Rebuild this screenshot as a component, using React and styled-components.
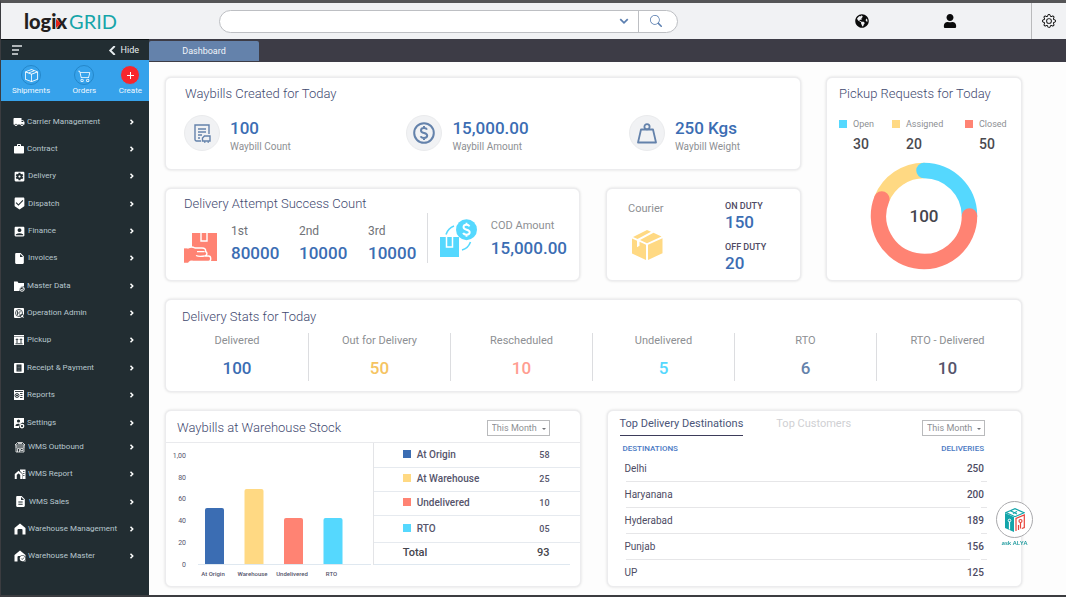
import React, { useState } from "react";
import styled, { createGlobalStyle } from "styled-components";
import { FaGlobeAmericas, FaUser } from "react-icons/fa";
import { BsGear, BsCart2, BsBoxSeam, BsSearch } from "react-icons/bs";
import {
  MdLocalShipping,
  MdWork,
  MdSettingsApplications,
  MdBeenhere,
  MdAccountBox,
  MdInsertDriveFile,
  MdDescription,
} from "react-icons/md";

const GlobalStyle = createGlobalStyle`
  * {
    box-sizing: border-box;
  }
  body {
    margin: 0;
    font-family: Roboto, "Liberation Sans", sans-serif;
    background: #fdfdfd;
  }
  button, input, select {
    font-family: inherit;
  }
  h2, p, ul, dl, dd {
    margin: 0;
    padding: 0;
  }
  svg {
    display: block;
    flex-shrink: 0;
  }
`;

const Page = styled.div`
  display: flex;
  flex-direction: column;
  min-height: 100vh;
  border-top: 3px solid #555557;
  border-bottom: 2px solid #3b3c40;
  border-left: 1px solid #3b3c40;
`;

/* header */

const Header = styled.header`
  display: flex;
  align-items: center;
  height: 36px;
  background: #f1f2f4;
`;

const Logo = styled.a`
  display: flex;
  align-items: center;
  width: 148px;
  padding-left: 23px;
  font-family: Lato, "Open Sans", sans-serif;
  font-size: 20px;
  line-height: 24px;
  color: #16a5a9;
  text-decoration: none;
  > b {
    font-weight: 900;
    color: #231f20;
  }
  > b:last-of-type {
    margin-right: 2px;
  }
  > svg {
    margin: 4px -6px 0 0;
    z-index: 1;
  }
`;

const Search = styled.form`
  display: flex;
  flex: 1;
  height: 23px;
  margin-left: 70px;
  border: 1px solid #bdbfc3;
  border-radius: 12px;
  background: #fff;
  overflow: hidden;
  > input {
    flex: 1;
    min-width: 0;
    padding: 0 12px;
    border: none;
    outline: none;
    background: none;
    font-size: 11px;
  }
`;

const SearchButton = styled.button`
  display: flex;
  align-items: center;
  justify-content: center;
  width: ${(props) => (props.$divided ? "39px" : "28px")};
  padding: 0 ${(props) => (props.$divided ? "5px" : "0")} 0 0;
  border: none;
  border-left: ${(props) => (props.$divided ? "1px solid #bdbfc3" : "none")};
  background: none;
  color: #5b7fb0;
`;

const HeaderButtons = styled.div`
  display: flex;
  justify-content: space-between;
  width: 102px;
  margin: 0 74px 0 177px;
`;

const IconButton = styled.button`
  display: flex;
  align-items: center;
  justify-content: center;
  width: 14px;
  height: 14px;
  padding: 0;
  border: none;
  background: none;
  color: #0b0b0b;
`;

const SettingsArea = styled.div`
  display: flex;
  align-items: center;
  justify-content: center;
  width: 35px;
  height: 36px;
  border-left: 1px solid #b9babc;
`;

/* sidebar */

const Body = styled.div`
  display: flex;
  flex: 1;
`;

const Sidebar = styled.nav`
  display: flex;
  flex-direction: column;
  width: 148px;
  flex-shrink: 0;
  background: #222d32;
`;

const SidebarHeader = styled.div`
  display: flex;
  align-items: center;
  justify-content: space-between;
  height: 21px;
  padding: 0 10px 0 9px;
  border-top: 1px solid #0c1012;
`;

const HideButton = styled.button`
  display: flex;
  align-items: center;
  gap: 4px;
  padding: 0;
  border: none;
  background: none;
  font-size: 9px;
  line-height: 12px;
  color: #e8edf0;
`;

const QuickActions = styled.div`
  display: flex;
  justify-content: space-between;
  height: 41px;
  padding: 5px 7px 0 11px;
  background: #36a2eb;
`;

const QuickAction = styled.button`
  display: flex;
  flex-direction: column;
  align-items: center;
  gap: 1px;
  padding: 0;
  border: none;
  background: none;
  font-size: 8px;
  line-height: 10px;
  color: #f0f8fe;
`;

const ActionCircle = styled.span`
  display: flex;
  align-items: center;
  justify-content: center;
  width: 20px;
  height: 20px;
  border: 1px solid ${(props) => (props.$accent ? "#36a2eb" : "#2487ca")};
  border-radius: 50%;
  background: ${(props) => (props.$accent ? "#f7262d" : "transparent")};
  color: #fff;
`;

const Menus = styled.div`
  display: flex;
  flex-direction: column;
  flex: 1;
  padding: 7px 0 25px;
`;

const Menu = styled.ul`
  display: grid;
  grid-auto-rows: 1fr;
  flex: ${(props) => props.$rows} 1 0;
  margin-top: ${(props) => (props.$second ? "-3px" : "0")};
  padding-left: ${(props) => (props.$second ? "1px" : "0")};
  list-style: none;
`;

const MenuItem = styled.li`
  display: flex;
  > a {
    display: flex;
    align-items: center;
    flex: 1;
    gap: 2px;
    padding: 0 14px 0 12px;
    font-size: 8px;
    line-height: 12px;
    color: #b8c7ce;
    text-decoration: none;
  }
  > a > span {
    flex: 1;
  }
  > a > svg {
    color: #fff;
  }
`;

/* content */

const Content = styled.div`
  display: flex;
  flex-direction: column;
  flex: 1;
  min-width: 0;
`;

const PageTabs = styled.div`
  display: flex;
  align-items: flex-end;
  height: 23px;
  padding-bottom: 1px;
  background: #3d3c46;
`;

const PageTab = styled.button`
  width: 110px;
  height: 20px;
  padding: 0;
  border: none;
  border-radius: 2px 2px 0 0;
  background: #6482ab;
  font-size: 9px;
  color: #f1f5fa;
`;

const Main = styled.main`
  display: flex;
  flex-direction: column;
  gap: 18px;
  padding: 15px 44px 8px 16px;
`;

const TopRow = styled.div`
  display: grid;
  grid-template-columns: 1fr 196px;
  gap: 25px;
`;

const TopLeft = styled.div`
  display: flex;
  flex-direction: column;
  gap: 18px;
`;

const SplitRow = styled.div`
  display: grid;
  grid-template-columns: 1fr 195px;
  gap: 26px;
`;

const BottomRow = styled.div`
  display: grid;
  grid-template-columns: 1fr 1fr;
  gap: 26px;
`;

const Card = styled.section`
  border: 1px solid #ececee;
  border-radius: 6px;
  background: #fff;
  box-shadow: 0 0 3px rgba(0, 0, 0, 0.14);
`;

const Title = styled.h2`
  font-size: 13px;
  font-weight: 300;
  line-height: 16px;
  color: #3f4a70;
`;

const Value = styled.dd`
  font-size: 17px;
  font-weight: 500;
  line-height: 20px;
  color: ${(props) => props.$color || "#3b6db3"};
`;

const Label = styled.dt`
  font-size: ${(props) => (props.$large ? "12px" : "10px")};
  line-height: 16px;
  color: ${(props) => (props.$dark ? "#707277" : "#8d8f93")};
`;

const WaybillsCard = styled(Card)`
  padding: 8px 0 14px 18px;
  > h2 {
    padding-left: 1px;
  }
`;

const WaybillStats = styled.div`
  display: grid;
  grid-template-columns: 13fr 13fr 10fr;
  margin-top: 13px;
`;

const WaybillStat = styled.div`
  display: flex;
  align-items: flex-start;
  gap: 10px;
  > dl {
    display: flex;
    flex-direction: column-reverse;
    gap: 1px;
    padding-top: 3px;
  }
`;

const IconCircle = styled.span`
  display: flex;
  align-items: center;
  justify-content: center;
  width: 36px;
  height: 36px;
  border: 1px solid #eaebed;
  border-radius: 50%;
  background: #f1f2f4;
`;

const AttemptsCard = styled(Card)`
  display: flex;
  justify-content: space-between;
  padding: 7px 12px 17px 18px;
`;

const Attempts = styled.div`
  display: grid;
  grid-template-columns: 47px 68px 69px 47px;
  align-items: end;
  margin-top: 11px;
`;

const StackedStat = styled.dl`
  display: flex;
  flex-direction: column;
  gap: 4px;
`;

const CodStat = styled.div`
  display: flex;
  align-items: center;
  align-self: flex-end;
  gap: 13px;
  height: 50px;
  padding-left: 12px;
  border-left: 1px solid #dcdde0;
`;

const CourierCard = styled(Card)`
  display: grid;
  grid-template-columns: 1fr 75px;
  padding: 11px 0 7px 21px;
`;

const Courier = styled.div`
  padding-top: 1px;
  font-size: 11px;
  line-height: 16px;
  color: #8d8f93;
  > svg {
    margin: 12px 0 0 3px;
  }
`;

const Duties = styled.div`
  display: flex;
  flex-direction: column;
  gap: 9px;
`;

const DutyLabel = styled.dt`
  font-size: 9px;
  font-weight: 500;
  line-height: 12px;
  color: #4e4a63;
`;

const PickupCard = styled(Card)`
  padding: 8px 12px 10px;
  > svg {
    margin: 9px auto 0;
  }
`;

const PickupLegend = styled.div`
  display: grid;
  grid-template-columns: 53px 73px 1fr;
  margin-top: 16px;
`;

const PickupStat = styled.dl`
  > dt {
    display: flex;
    align-items: center;
    gap: 6px;
    font-size: 9px;
    line-height: 12px;
    color: #8d8f93;
  }
  > dd {
    margin-top: 5px;
    padding-left: 14px;
    font-size: 14px;
    font-weight: 500;
    line-height: 18px;
    color: #4a4a4f;
  }
`;

const Swatch = styled.i`
  display: inline-block;
  width: 8px;
  height: 8px;
  background: ${(props) => props.$color};
`;

const StatsCard = styled(Card)`
  padding: 9px 3px 10px 0;
  > h2 {
    padding-left: 16px;
  }
`;

const DeliveryStats = styled.div`
  display: grid;
  grid-template-columns: repeat(6, 1fr);
  margin-top: 8px;
`;

const DeliveryStat = styled.dl`
  display: flex;
  flex-direction: column;
  align-items: center;
  gap: 9px;
  padding-bottom: 3px;
  & + & {
    border-left: 1px solid #dcdde0;
  }
`;

const StatLabel = styled.dt`
  font-size: 11px;
  line-height: 16px;
  color: #8d8f93;
`;

/* bottom cards */

const StockHeader = styled.div`
  display: flex;
  align-items: center;
  justify-content: space-between;
  height: 32px;
  padding: 2px 30px 0 11px;
  border-bottom: 1px solid #e9eaed;
`;

const SelectBox = styled.label`
  display: inline-flex;
  position: relative;
  > select {
    appearance: none;
    width: 63px;
    height: 16px;
    padding: 0 4px;
    border: 1px solid #b9babc;
    border-radius: 0;
    background: #fff;
    font-size: 9px;
    color: #8d8f93;
  }
  > svg {
    position: absolute;
    top: 8px;
    right: 4px;
    pointer-events: none;
  }
`;

const StockBody = styled.div`
  display: grid;
  grid-template-columns: 1fr 1fr;
`;

const StockLegend = styled.div`
  border-left: 1px solid #e3e4e7;
  align-self: start;
`;

const StockTable = styled.table`
  width: 100%;
  border-collapse: collapse;
  color: #55546b;
  th,
  td {
    height: 24px;
    padding: 0;
    border-bottom: 1px solid #e6eaef;
    font-size: 10px;
    font-weight: 500;
    line-height: 14px;
  }
  tr:last-child > * {
    height: 27px;
  }
  th {
    padding-left: 29px;
    text-align: left;
  }
  th > i {
    margin-right: 6px;
  }
  td {
    padding-right: 30px;
    font-size: 9px;
    text-align: right;
  }
  tfoot tr:last-child > * {
    height: 22px;
    border: none;
    font-size: 11px;
    color: #45454d;
  }
`;

const Baseline = styled.hr`
  height: 1px;
  margin: 0 10px 0 0;
  border: none;
  background: #dfe8f0;
`;

const DestinationsCard = styled(Card)`
  padding: 5px 34px 0 12px;
`;

const DestinationsHeader = styled.div`
  display: flex;
  align-items: flex-end;
  padding-right: 2px;
  > label {
    margin-left: auto;
  }
`;

const ListTab = styled.button`
  margin-right: 33px;
  padding: 0 0 3px;
  border: none;
  border-bottom: 1px solid ${(props) => (props.$active ? "#3d3c5a" : "transparent")};
  background: none;
  font-size: 11px;
  line-height: 16px;
  color: ${(props) => (props.$active ? "#4a5578" : "#cfd0d3")};
`;

const DestinationsTable = styled.table`
  width: 100%;
  margin-top: 6px;
  border-collapse: collapse;
  color: #4d4b63;
  th,
  td {
    padding: 0;
    text-align: left;
  }
  th:last-child,
  td:last-child {
    padding-right: 3px;
    text-align: right;
  }
  thead th {
    height: 14px;
    padding-left: 3px;
    font-size: 8px;
    font-weight: 500;
    line-height: 10px;
    color: #4a79c4;
  }
  tbody td {
    height: 26px;
    padding-left: 5px;
    font-size: 10px;
    line-height: 14px;
  }
  tbody td:last-child {
    font-weight: 500;
  }
  tbody tr:not(:last-child) {
    background: linear-gradient(
        to right,
        transparent 6px,
        #e6e6e8 6px calc(100% - 17px),
        transparent 0 calc(100% - 6px),
        #e6e6e8 0
      )
      bottom / 100% 1px no-repeat;
  }
`;

const AskButton = styled.button`
  position: fixed;
  right: 33px;
  bottom: 49px;
  display: flex;
  flex-direction: column;
  align-items: center;
  padding: 0;
  border: none;
  background: none;
  font-family: "Open Sans", sans-serif;
  font-size: 6px;
  font-weight: 600;
  line-height: 10px;
  color: #16969a;
  > span {
    display: flex;
    align-items: center;
    justify-content: center;
    width: 37px;
    height: 37px;
    border: 1px solid #a9a9ac;
    border-radius: 50%;
    background: #fff;
  }
`;

/* icons */

const Chevron = ({ size = 6, width = 2, path = "M2 1l3 3-3 3" }) => (
  <svg width={size} height={size} viewBox="0 0 8 8" fill="none" stroke="currentColor" strokeWidth={width}>
    <path d={path} />
  </svg>
);

const MasterDataIcon = () => (
  <svg width="12" height="12" viewBox="0 0 24 24" fill="currentColor">
    <path d="M2 3h7l2 3h11v7a7 7 0 0 0-9 9H2z" />
    <circle cx="18" cy="18" r="4.500" fill="none" stroke="currentColor" strokeWidth="2" />
    <path d="M16 18l2 2 3-4" fill="none" stroke="currentColor" strokeWidth="1.500" />
  </svg>
);

const OperationIcon = () => (
  <svg width="12" height="12" viewBox="0 0 24 24" fill="currentColor">
    <path d="M4 2h16a2 2 0 0 1 2 2v16a2 2 0 0 1-2 2H4a2 2 0 0 1-2-2V4a2 2 0 0 1 2-2z" />
    <g fill="none" stroke="#222d32" strokeWidth="1.600">
      <circle cx="12" cy="12" r="7" />
      <path d="M9 8v8M9 12h5M14 8v3M12 16h3" />
      <circle cx="18" cy="18" r="3.500" />
    </g>
  </svg>
);

const PickupIcon = () => (
  <svg width="12" height="12" viewBox="0 0 24 24">
    <path d="M2 2h20v3H2zM2 6h20v16H2z" fill="currentColor" />
    <path d="M8 18v-8M5.500 12L8 9.500l2.500 2.500M16 18v-8M13.500 12L16 9.500l2.500 2.500M5 19.500h14" fill="none" stroke="#222d32" strokeWidth="1.800" />
  </svg>
);

const ReceiptIcon = () => (
  <svg width="12" height="12" viewBox="0 0 24 24">
    <rect x="2" y="2" width="20" height="20" rx="2" fill="currentColor" />
    <rect x="7" y="5" width="10" height="14" fill="#222d32" />
    <path d="M9 8h6M9 11h6M9 14h6M9 17h6" stroke="#8c979d" strokeWidth="1" />
  </svg>
);

const ReportsIcon = () => (
  <svg width="12" height="12" viewBox="0 0 24 24">
    <rect x="2" y="2" width="20" height="20" rx="1" fill="currentColor" />
    <g fill="none" stroke="#222d32" strokeWidth="1.800">
      <path d="M4 5h16M14 9h5M15 13h4M14 17h5" />
      <circle cx="8" cy="13" r="4" />
      <path d="M8 11v4M6 13h4" />
    </g>
  </svg>
);

const UserSettingsIcon = () => (
  <svg width="12" height="12" viewBox="0 0 24 24">
    <path d="M2 2h20v10l-3-1-6 4-1 7H2z" fill="currentColor" />
    <circle cx="11" cy="8" r="3.200" fill="#222d32" />
    <path d="M5 18c0-4 4-5 8-4l-2 4z" fill="#222d32" />
    <circle cx="18" cy="18" r="3.500" fill="none" stroke="currentColor" strokeWidth="2.500" />
  </svg>
);

const OutboundIcon = () => (
  <svg width="12" height="12" viewBox="0 0 24 24" fill="none" stroke="currentColor" strokeWidth="1.500">
    <path d="M2 8l5-5h10l5 5M2 8h20M3 12h18M4 8v14h16V8M7 22v-7h4v7M13 15h5v4h-5zM8 5h8" />
  </svg>
);

const WarehouseReportIcon = () => (
  <svg width="12" height="12" viewBox="0 0 24 24">
    <path d="M12 3h11v19h-6V11l-5-5z" fill="currentColor" />
    <path d="M18 7h3M18 11h3M18 15h3" stroke="#222d32" strokeWidth="1.500" />
    <path d="M3.500 22v-9L9 8l5.500 5v9" fill="none" stroke="currentColor" strokeWidth="4" />
  </svg>
);

const WarehouseIcon = ({ badge }) => (
  <svg width="12" height="12" viewBox="0 0 24 24">
    <path d="M1 10l11-9 11 9v13h-6v-9a2 2 0 0 0-2-2H9a2 2 0 0 0-2 2v9H1z" fill="currentColor" />
    {badge && (
      <>
        <circle cx="17" cy="17" r="6.500" fill="#222d32" />
        <circle cx="17" cy="17" r="5.500" fill="currentColor" />
        <path d="M14.500 17l2 2 3.500-4" fill="none" stroke="#222d32" strokeWidth="1.500" />
      </>
    )}
  </svg>
);

const WaybillIcon = () => (
  <svg width="17" height="19" viewBox="0 0 17 19" fill="none" stroke="#6482ab" strokeWidth="1.400">
    <path d="M7 17H2.500A1.500 1.500 0 0 1 1 15.500V1h14v9M4 5h8M4 8h8M4 11h4M4 14h2" />
    <path d="M8.500 17v-3l2-2h5.500v5z" />
    <path d="M10 18h1.500M13.500 18H15" strokeWidth="1.600" />
  </svg>
);

const DollarPath = () => (
  <path d="M15 8.600C14.500 7.500 13.400 7 12 7 10.200 7 9 8 9 9.400 9 12.900 15.200 11.200 15.200 14.600 15.200 16.100 13.900 17 12 17 10.300 17 9.100 16.400 8.700 15.200M12 5v2M12 17v2" />
);

const AmountIcon = () => (
  <svg width="22" height="22" viewBox="1 1 22 22" fill="none" stroke="#6482ab" strokeWidth="2">
    <circle cx="12" cy="12" r="9.800" />
    <DollarPath />
  </svg>
);

const WeightIcon = () => (
  <svg width="20" height="21" viewBox="0 0 20 21" fill="none" stroke="#6482ab" strokeWidth="1.800" strokeLinejoin="round">
    <path d="M4 6.500h12L19 19.500H1z" />
    <circle cx="10" cy="3.700" r="2.600" />
  </svg>
);

const HandBoxIcon = () => (
  <svg width="34" height="30" viewBox="0 0 34 30">
    <path d="M8 0h25v28H8z" fill="#ff8373" />
    <path d="M17 0v8h6V0" fill="none" stroke="#fff" strokeWidth="1.400" />
    <path
      d="M-2 15h6c2-1.200 5-1.200 7 0h7c3 0 4 1.500 3.500 3.500 2 1 2 4-1 4.500h4c3 0 3 5.500 0 5.500H11c-3 0-4-1-6 1v1h-7z"
      fill="#ff8373"
      stroke="#fff"
      strokeWidth="1.400"
    />
    <path d="M12 22.500c2 1 5 1 8.500.5M13 18.700h7.500" fill="none" stroke="#fff" strokeWidth="1.300" />
    <path d="M0 15.500h3.500V29H0z" fill="#ff8373" />
  </svg>
);

const CodIcon = () => (
  <svg width="38" height="38" viewBox="0 0 38 38">
    <path d="M0 18h19v20H0z" fill="#55d8fe" />
    <path d="M6.500 18v10h6V18" fill="none" stroke="#fff" strokeWidth="1.500" />
    <circle cx="26.500" cy="10.700" r="10.500" fill="#55d8fe" />
    <path d="M6 15.500C7.500 11 10 8.500 14 7M22 31c4-1 7-4 8.500-8" fill="none" stroke="#55d8fe" strokeWidth="1.600" />
    <g transform="translate(14.500 -1.300)" fill="none" stroke="#fff" strokeWidth="1.900">
      <DollarPath />
    </g>
  </svg>
);

const BoxIcon = () => (
  <svg width="32" height="32" viewBox="0 0 32 32" fill="#ffd983">
    <path d="M1 9.500l5 2.200v6.500l2.500-1.500v-3.900L15 15.700V31L1 24.500zM17 15.700l14.500-6.500v15L17 31zM2 8L16 1l4 1.800L6.500 10zM9 11l13.500-7.200 8 3.800L16 14.300z" />
  </svg>
);

const AlyaIcon = () => (
  <svg width="20" height="24" viewBox="0 0 20 24">
    <path d="M0 5l9 4v15l-9-4z" fill="#13a5aa" />
    <path d="M4.500 13.500v8" stroke="#fff" strokeWidth="1.200" />
    <circle cx="4.500" cy="12.500" r="1.300" fill="none" stroke="#fff" />
    <path d="M1 4.500L10 .7l9 4-9 4zM6 3l6 3M8 5.500l4-2" fill="none" stroke="#13a5aa" strokeWidth="1.200" />
    <path d="M11 23V10.500L19.300 7v12.500l-2.500 1M13.500 22v-5M15.500 14.500v6" fill="none" stroke="#e8453c" strokeWidth="1.200" />
    <circle cx="15.500" cy="13" r="1.500" fill="none" stroke="#e8453c" strokeWidth="1.200" />
  </svg>
);

const Donut = () => (
  <svg width="108" height="108" viewBox="-54 -54 108 108" fill="none" strokeWidth="15.500" strokeLinecap="round">
    <path d="M-42.200 -17A45.500 45.500 0 0 1 0 -45.500" stroke="#ffd983" />
    <path d="M0 -45.500A45.500 45.500 0 0 1 45.500 0" stroke="#55d8fe" />
    <path d="M45.500 0A45.500 45.500 0 1 1 -42.200 -17" stroke="#ff8373" />
    <text x="0" y="6" textAnchor="middle" fontSize="17" fontWeight="500" fill="#45454d">
      100
    </text>
  </svg>
);

/* data */

const menu = [
  { name: "Carrier Management", icon: <MdLocalShipping size={12} /> },
  { name: "Contract", icon: <MdWork size={12} /> },
  { name: "Delivery", icon: <MdSettingsApplications size={13} /> },
  { name: "Dispatch", icon: <MdBeenhere size={13} /> },
  { name: "Finance", icon: <MdAccountBox size={13} /> },
  { name: "Invoices", icon: <MdInsertDriveFile size={13} /> },
  { name: "Master Data", icon: <MasterDataIcon /> },
  { name: "Operation Admin", icon: <OperationIcon /> },
  { name: "Pickup", icon: <PickupIcon /> },
  { name: "Receipt & Payment", icon: <ReceiptIcon /> },
  { name: "Reports", icon: <ReportsIcon /> },
  { name: "Settings", icon: <UserSettingsIcon /> },
];

const warehouseMenu = [
  { name: "WMS Outbound", icon: <OutboundIcon /> },
  { name: "WMS Report", icon: <WarehouseReportIcon /> },
  { name: "WMS Sales", icon: <MdDescription size={13} /> },
  { name: "Warehouse Management", icon: <WarehouseIcon /> },
  { name: "Warehouse Master", icon: <WarehouseIcon badge /> },
];

const waybills = [
  { value: "100", label: "Waybill Count", icon: <WaybillIcon /> },
  { value: "15,000.00", label: "Waybill Amount", icon: <AmountIcon /> },
  { value: "250 Kgs", label: "Waybill Weight", icon: <WeightIcon /> },
];

const attempts = [
  { label: "1st", value: "80000" },
  { label: "2nd", value: "10000" },
  { label: "3rd", value: "10000" },
];

const pickups = [
  { label: "Open", value: 30, color: "#55d8fe" },
  { label: "Assigned", value: 20, color: "#ffd983" },
  { label: "Closed", value: 50, color: "#ff8373" },
];

const deliveryStats = [
  { label: "Delivered", value: 100, color: "#3b6db3" },
  { label: "Out for Delivery", value: 50, color: "#f5c462" },
  { label: "Rescheduled", value: 10, color: "#ff9d91" },
  { label: "Undelivered", value: 5, color: "#55d8fe" },
  { label: "RTO", value: 6, color: "#6482ab" },
  { label: "RTO - Delivered", value: 10, color: "#55546b" },
];

const stock = [
  { label: "At Origin", short: "At Origin", value: "58", bar: 56, color: "#3b6db3" },
  { label: "At Warehouse", short: "Warehouse", value: "25", bar: 75, color: "#ffd983" },
  { label: "Undelivered", short: "Undelivered", value: "10", bar: 46, color: "#ff8373" },
  { label: "RTO", short: "RTO", value: "05", bar: 46, color: "#55d8fe" },
];

const scale = ["1,00", "80", "60", "40", "20", "0"];

const destinations = [
  ["Delhi", 250],
  ["Haryanana", 200],
  ["Hyderabad", 189],
  ["Punjab", 156],
  ["UP", 125],
];

const MenuList = ({ items, second }) => (
  <Menu $rows={items.length} $second={second}>
    {items.map((item) => (
      <MenuItem key={item.name}>
        <a href="#">
          {item.icon}
          <span>{item.name}</span>
          <Chevron />
        </a>
      </MenuItem>
    ))}
  </Menu>
);

const MonthSelect = ({ label }) => (
  <SelectBox>
    <select aria-label={label}>
      <option>This Month</option>
    </select>
    <svg width="4" height="2" viewBox="0 0 4 2">
      <path d="M0 0h4L2 2z" fill="#707277" />
    </svg>
  </SelectBox>
);

const StockChart = () => (
  <svg width="205" height="142" viewBox="0 0 205 142">
    {scale.map((tick, index) => (
      <text key={tick} x="20" y={15 + index * 21.7} textAnchor="end" fontSize="7" fill="#55546b">
        {tick}
      </text>
    ))}
    <path d="M32 121.500H205" stroke="#dfe8f0" />
    {stock.map((item, index) => {
      const x = 39 + index * 39.500;
      const top = 121 - item.bar;
      return (
        <g key={item.label}>
          <path d={`M${x} 121V${top + 2}q0-2 2-2h15q2 0 2 2V121z`} fill={item.color} />
          <text x={x + 8} y="133" textAnchor="middle" fontSize="6" fontWeight="500" fill="#55546b">
            {item.short}
          </text>
        </g>
      );
    })}
  </svg>
);

function App() {
  const [tab, setTab] = useState("destinations");

  return (
    <>
      <GlobalStyle />
      <Page>
        <Header>
          <Logo href="#">
            <b>logi</b>
            <svg width="6" height="9" viewBox="0 0 6 9">
              <path d="M0 0l5 4.500L0 9z" fill="#e2231a" />
            </svg>
            <b>x</b>
            GRID
          </Logo>
          <Search onSubmit={(e) => e.preventDefault()}>
            <input type="text" aria-label="Search" />
            <SearchButton type="button" aria-label="Search options">
              <Chevron size={10} width={1.400} path="M1 2.500l3 3 3-3" />
            </SearchButton>
            <SearchButton $divided aria-label="Search">
              <BsSearch size={12} />
            </SearchButton>
          </Search>
          <HeaderButtons>
            <IconButton aria-label="Language">
              <FaGlobeAmericas size={14} />
            </IconButton>
            <IconButton aria-label="Account">
              <FaUser size={14} />
            </IconButton>
          </HeaderButtons>
          <SettingsArea>
            <IconButton aria-label="Settings">
              <BsGear size={14} />
            </IconButton>
          </SettingsArea>
        </Header>
        <Body>
          <Sidebar>
            <SidebarHeader>
              <IconButton aria-label="Menu">
                <svg width="12" height="10" viewBox="0 0 12 10" stroke="#dfe4e6" strokeWidth="1.300">
                  <path d="M1 1h10M1 5h7M1 9h6" />
                </svg>
              </IconButton>
              <HideButton>
                <Chevron size={9} width={1.700} path="M6 0L2 4l4 4" />
                Hide
              </HideButton>
            </SidebarHeader>
            <QuickActions>
              <QuickAction>
                <ActionCircle>
                  <BsBoxSeam size={13} />
                </ActionCircle>
                Shipments
              </QuickAction>
              <QuickAction>
                <ActionCircle>
                  <BsCart2 size={13} />
                </ActionCircle>
                Orders
              </QuickAction>
              <QuickAction>
                <ActionCircle $accent>
                  <svg width="7" height="7" viewBox="0 0 7 7" stroke="#fff">
                    <path d="M3.500 0v7M0 3.500h7" />
                  </svg>
                </ActionCircle>
                Create
              </QuickAction>
            </QuickActions>
            <Menus>
              <MenuList items={menu} />
              <MenuList items={warehouseMenu} second />
            </Menus>
          </Sidebar>
          <Content>
            <PageTabs>
              <PageTab>Dashboard</PageTab>
            </PageTabs>
            <Main>
              <TopRow>
                <TopLeft>
                  <WaybillsCard>
                    <Title>Waybills Created for Today</Title>
                    <WaybillStats>
                      {waybills.map((item) => (
                        <WaybillStat key={item.label}>
                          <IconCircle>{item.icon}</IconCircle>
                          <dl>
                            <Label>{item.label}</Label>
                            <Value>{item.value}</Value>
                          </dl>
                        </WaybillStat>
                      ))}
                    </WaybillStats>
                  </WaybillsCard>
                  <SplitRow>
                    <AttemptsCard>
                      <div>
                        <Title>Delivery Attempt Success Count</Title>
                        <Attempts>
                          <HandBoxIcon />
                          {attempts.map((item) => (
                            <StackedStat key={item.label}>
                              <Label $large $dark>
                                {item.label}
                              </Label>
                              <Value>{item.value}</Value>
                            </StackedStat>
                          ))}
                        </Attempts>
                      </div>
                      <CodStat>
                        <CodIcon />
                        <StackedStat>
                          <StatLabel>COD Amount</StatLabel>
                          <Value>15,000.00</Value>
                        </StackedStat>
                      </CodStat>
                    </AttemptsCard>
                    <CourierCard>
                      <Courier>
                        <p>Courier</p>
                        <BoxIcon />
                      </Courier>
                      <Duties>
                        <dl>
                          <DutyLabel>ON DUTY</DutyLabel>
                          <Value>150</Value>
                        </dl>
                        <dl>
                          <DutyLabel>OFF DUTY</DutyLabel>
                          <Value>20</Value>
                        </dl>
                      </Duties>
                    </CourierCard>
                  </SplitRow>
                </TopLeft>
                <PickupCard>
                  <Title>Pickup Requests for Today</Title>
                  <PickupLegend>
                    {pickups.map((item) => (
                      <PickupStat key={item.label}>
                        <dt>
                          <Swatch $color={item.color} />
                          {item.label}
                        </dt>
                        <dd>{item.value}</dd>
                      </PickupStat>
                    ))}
                  </PickupLegend>
                  <Donut />
                </PickupCard>
              </TopRow>
              <StatsCard>
                <Title>Delivery Stats for Today</Title>
                <DeliveryStats>
                  {deliveryStats.map((item) => (
                    <DeliveryStat key={item.label}>
                      <StatLabel>{item.label}</StatLabel>
                      <Value $color={item.color}>{item.value}</Value>
                    </DeliveryStat>
                  ))}
                </DeliveryStats>
              </StatsCard>
              <BottomRow>
                <Card>
                  <StockHeader>
                    <Title>Waybills at Warehouse Stock</Title>
                    <MonthSelect label="Stock period" />
                  </StockHeader>
                  <StockBody>
                    <StockChart />
                    <StockLegend>
                      <StockTable>
                        <tbody>
                          {stock.map((item) => (
                            <tr key={item.label}>
                              <th scope="row">
                                <Swatch $color={item.color} />
                                {item.label}
                              </th>
                              <td>{item.value}</td>
                            </tr>
                          ))}
                        </tbody>
                        <tfoot>
                          <tr>
                            <th scope="row">Total</th>
                            <td>93</td>
                          </tr>
                        </tfoot>
                      </StockTable>
                      <Baseline />
                    </StockLegend>
                  </StockBody>
                </Card>
                <DestinationsCard>
                  <DestinationsHeader>
                    <ListTab $active={tab === "destinations"} onClick={() => setTab("destinations")}>
                      Top Delivery Destinations
                    </ListTab>
                    <ListTab $active={tab === "customers"} onClick={() => setTab("customers")}>
                      Top Customers
                    </ListTab>
                    <MonthSelect label="Destinations period" />
                  </DestinationsHeader>
                  <DestinationsTable>
                    <thead>
                      <tr>
                        <th>DESTINATIONS</th>
                        <th>DELIVERIES</th>
                      </tr>
                    </thead>
                    <tbody>
                      {destinations.map(([name, count]) => (
                        <tr key={name}>
                          <td>{name}</td>
                          <td>{count}</td>
                        </tr>
                      ))}
                    </tbody>
                  </DestinationsTable>
                </DestinationsCard>
              </BottomRow>
            </Main>
          </Content>
        </Body>
        <AskButton>
          <span>
            <AlyaIcon />
          </span>
          ask ALYA
        </AskButton>
      </Page>
    </>
  );
}

export default App;
